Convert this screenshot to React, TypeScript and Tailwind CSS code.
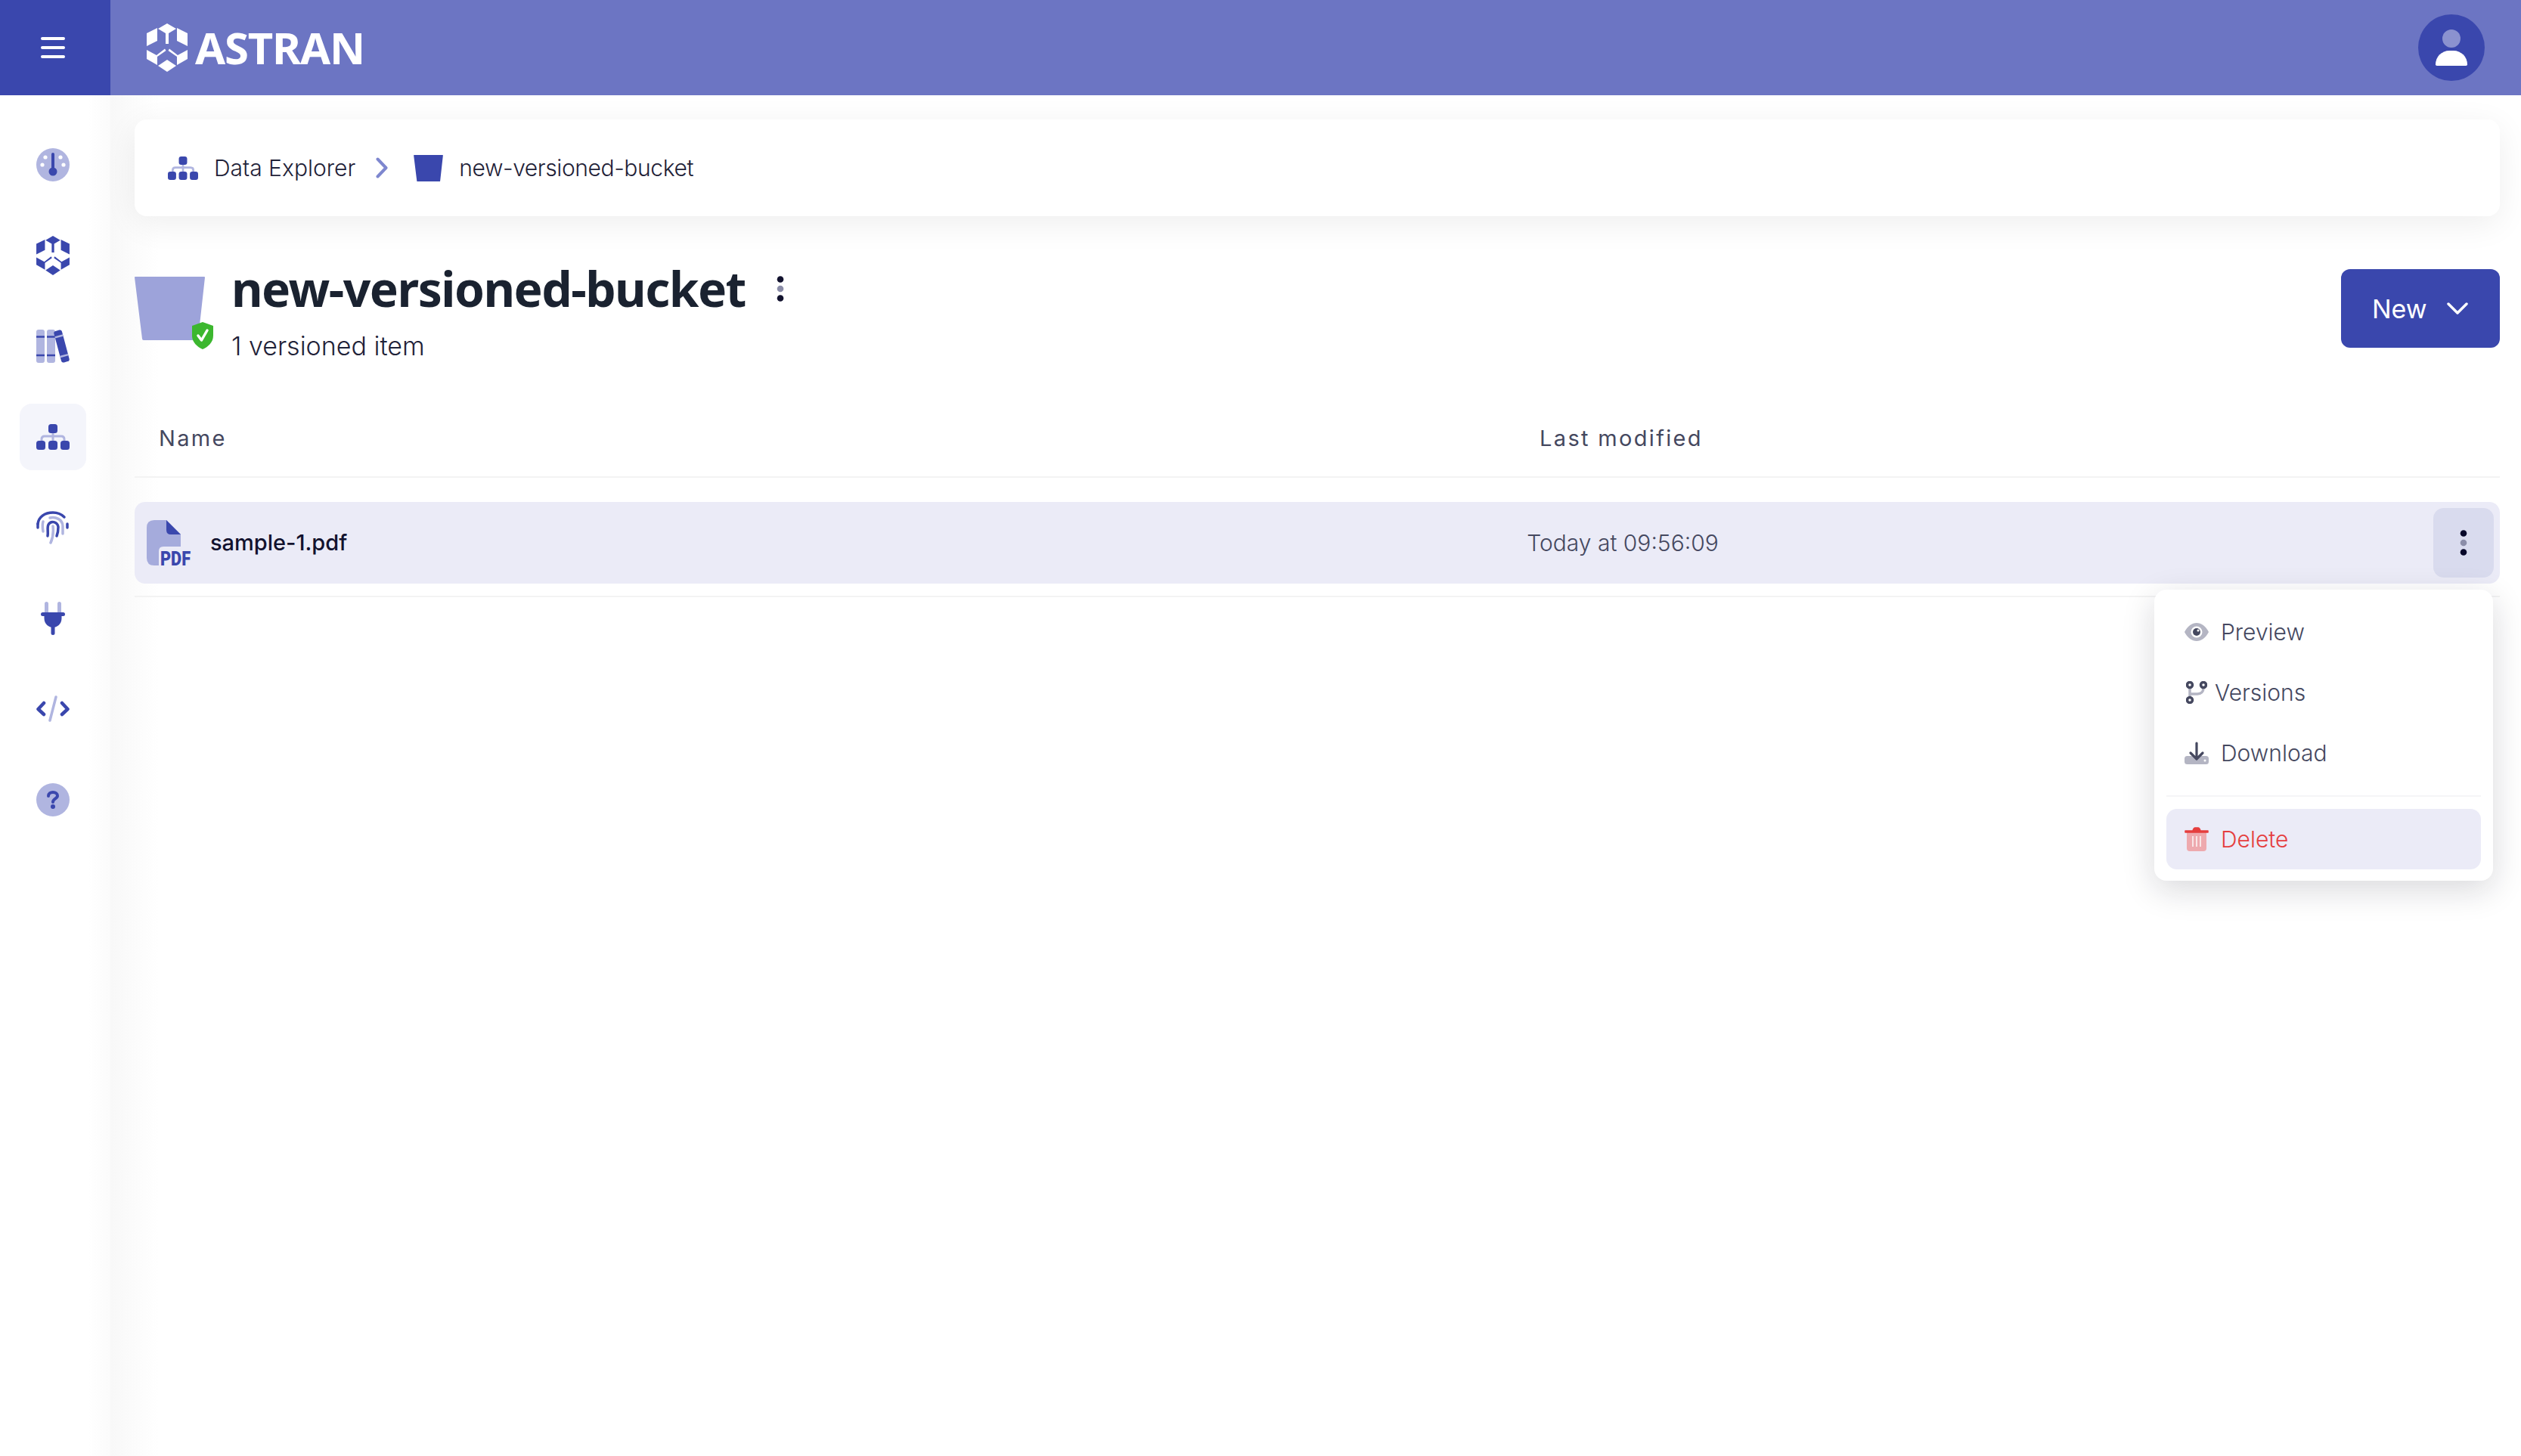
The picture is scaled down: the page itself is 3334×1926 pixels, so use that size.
const DARK = "#3A47AD";
const LIGHT = "#B0B5E0";

function HexLogo({ fill, className }: { fill: string; className?: string }) {
  return (
    <svg viewBox="0 0 54 64" className={className} fill={fill} aria-hidden>
      <path d="M27 0 39 7 29 13V27H25V13L15 7Z" />
      <path d="M0 13 14 6V23L0 30Z" />
      <path d="M54 13 40 6V23L54 30Z" />
      <path d="M0 35 13 42 24 33.5 25.5 36 14 44V55L0 47Z" />
      <path d="M54 35 41 42 30 33.5 28.5 36 40 44V55L54 47Z" />
      <path d="M27 48 39 56 27 64 15 56Z" />
    </svg>
  );
}

function TreeIcon({ className }: { className?: string }) {
  return (
    <svg viewBox="0 0 44 34" className={className} aria-hidden>
      <path d="M7 24V20Q7 16 11 16H33Q37 16 37 20V24M22 8V24" fill="none" stroke={LIGHT} strokeWidth="3" />
      <rect x="16" y="0" width="12" height="12" rx="3.5" fill={DARK} />
      <rect x="0" y="22" width="12" height="12" rx="3.5" fill={DARK} />
      <rect x="16" y="22" width="12" height="12" rx="3.5" fill={DARK} />
      <rect x="32" y="22" width="12" height="12" rx="3.5" fill={DARK} />
    </svg>
  );
}

function GaugeIcon() {
  return (
    <svg viewBox="0 0 44 44" className="h-11 w-11" aria-hidden>
      <circle cx="22" cy="22" r="22" fill={LIGHT} />
      <circle cx="12" cy="12" r="2.6" fill="#fff" />
      <circle cx="32" cy="12" r="2.6" fill="#fff" />
      <circle cx="8" cy="22" r="2.6" fill="#fff" />
      <circle cx="36" cy="22" r="2.6" fill="#fff" />
      <path d="M22 8V28" stroke={DARK} strokeWidth="4" strokeLinecap="round" />
      <circle cx="22" cy="31" r="5.5" fill={DARK} />
    </svg>
  );
}

function BooksIcon() {
  return (
    <svg viewBox="0 0 44 44" className="h-11 w-11 overflow-visible" aria-hidden>
      <rect x="0" y="0" width="11" height="44" rx="3" fill={LIGHT} />
      <rect x="14" y="0" width="11" height="44" rx="3" fill={LIGHT} />
      <path d="M0 9.500H11M14 9.500H25M0 34H11M14 34H25" stroke={DARK} strokeWidth="2.500" />
      <g transform="rotate(-15 33.500 22)">
        <rect x="28" y="0.500" width="11" height="43" rx="3" fill={DARK} />
        <path d="M28 8.500H39M28 35H39" stroke={LIGHT} strokeWidth="2.500" />
      </g>
    </svg>
  );
}

function FingerprintIcon() {
  return (
    <svg viewBox="0 0 44 44" className="h-11 w-11" fill="none" strokeLinecap="round" strokeWidth="3.500" aria-hidden>
      <path d="M2 17C3 8 11 2 22 2C28 2 33 4 37 8" stroke={DARK} />
      <path d="M41 17V22" stroke={DARK} />
      <path d="M2 17V22" stroke={DARK} />
      <path d="M9 14C8 17 8 21 9 27" stroke={LIGHT} />
      <path d="M18 9C25 7 35 11 35 20V30" stroke={LIGHT} />
      <path d="M15 33C16 27 14 22 16 18C19 12 28 14 29 21C29 25 29 28 27 33" stroke={DARK} />
      <path d="M22 20C23 28 22 35 19 42" stroke={LIGHT} />
    </svg>
  );
}

function PlugIcon() {
  return (
    <svg viewBox="0 0 32 44" className="h-11 w-8" aria-hidden>
      <path d="M7.500 2.500V14M24.500 2.500V14" stroke={LIGHT} strokeWidth="5" strokeLinecap="round" />
      <path d="M2.500 16.500H29.500" stroke={DARK} strokeWidth="5" strokeLinecap="round" />
      <path d="M4.500 16H27.500V22C27.500 30 21 34 16 34C11 34 4.500 30 4.500 22Z" fill={DARK} />
      <path d="M16 30V41.500" stroke={DARK} strokeWidth="5" strokeLinecap="round" />
    </svg>
  );
}

function CodeIcon() {
  return (
    <svg viewBox="0 0 44 36" className="h-9 w-11" fill="none" strokeWidth="4.500" strokeLinecap="round" strokeLinejoin="round" aria-hidden>
      <path d="M10 10 2.500 18 10 25" stroke={DARK} />
      <path d="M34 10 41.500 18 34 25" stroke={DARK} />
      <path d="M26 2 18 33" stroke={LIGHT} strokeWidth="3.500" />
    </svg>
  );
}

function HelpIcon() {
  return (
    <svg viewBox="0 0 44 44" className="h-11 w-11" aria-hidden>
      <circle cx="22" cy="22" r="22" fill={LIGHT} />
      <path d="M16 17C16 13.500 19 12 22 12C25.500 12 28 14 28 16.800C28 20.500 22 20.500 22 25" fill="none" stroke={DARK} strokeWidth="4" strokeLinecap="round" />
      <circle cx="22" cy="31" r="3" fill={DARK} />
    </svg>
  );
}

function BucketIcon({ fill, className }: { fill: string; className?: string }) {
  return (
    <svg viewBox="0 0 93 84" className={className} aria-hidden>
      <path d="M1 0H92Q93 0 93 1L84 82Q84 84 82 84H12Q10 84 10 82L0 1Q0 0 1 0Z" fill={fill} />
    </svg>
  );
}

function KebabDots({ dark }: { dark: string }) {
  return (
    <svg viewBox="0 0 10 34" className="h-[34px] w-[10px]" aria-hidden>
      <circle cx="5" cy="4.500" r="4.300" fill={dark} />
      <circle cx="5" cy="17" r="4.300" fill="#8B8DA8" />
      <circle cx="5" cy="29.500" r="4.300" fill={dark} />
    </svg>
  );
}

const Menu = [
  {
    label: "Preview",
    icon: (
      <svg viewBox="0 0 32 24" className="h-6 w-8" aria-hidden>
        <path d="M0 12C4 4 10 0 16 0C22 0 28 4 32 12C28 20 22 24 16 24C10 24 4 20 0 12Z" fill="#B4B5C3" />
        <circle cx="16" cy="12" r="7.500" fill="#fff" />
        <circle cx="16" cy="12" r="5" fill="#45485F" />
        <circle cx="18" cy="10" r="1.500" fill="#fff" />
      </svg>
    ),
    gap: "gap-4",
    iconBox: "w-8",
  },
  {
    label: "Versions",
    icon: (
      <svg viewBox="0 0 28 30" className="h-[30px] w-7" fill="none" aria-hidden>
        <path d="M5 9V21M5 17H15C20 17 23 14 23 9" stroke="#B4B5C3" strokeWidth="3.500" />
        <circle cx="5" cy="5" r="3.500" stroke="#45485F" strokeWidth="3.500" fill="#fff" />
        <circle cx="23" cy="5" r="3.500" stroke="#45485F" strokeWidth="3.500" fill="#fff" />
        <circle cx="5" cy="25" r="3.500" stroke="#45485F" strokeWidth="3.500" fill="#fff" />
      </svg>
    ),
    gap: "gap-[10px]",
    iconBox: "ml-[2px] w-7",
  },
  {
    label: "Download",
    icon: (
      <svg viewBox="0 0 32 30" className="h-[30px] w-8" aria-hidden>
        <rect x="0" y="19" width="32" height="11" rx="3.500" fill="#B4B5C3" />
        <circle cx="27" cy="25" r="1.500" fill="#fff" />
        <path d="M16 2V22M8 15 16 23 24 15" fill="none" stroke="#45485F" strokeWidth="3.200" strokeLinecap="round" strokeLinejoin="round" />
      </svg>
    ),
    gap: "gap-4",
    iconBox: "w-8",
  },
];

function RowMenu() {
  return (
    <div className="absolute right-[9px] top-[116px] z-10 w-[448px] rounded-2xl bg-white px-4 pb-[15px] pt-4 shadow-[0_12px_44px_rgba(20,20,40,0.16)]">
      <ul>
        {Menu.map((item) => (
          <li key={item.label} className={`flex h-20 items-center pl-6 ${item.gap} text-[#45485F]`}>
            <span className={`flex shrink-0 justify-center ${item.iconBox}`}>{item.icon}</span>
            <span className="text-[30px] font-light">{item.label}</span>
          </li>
        ))}
      </ul>
      <div className="mb-4 mt-4 h-[2px] bg-[#F5F5F7]" />
      <div className="flex h-20 items-center gap-4 rounded-[14px] bg-[#EBEBF7] pl-6 text-[#E53E3E]">
        <svg viewBox="0 0 32 32" className="h-8 w-8 shrink-0" aria-hidden>
          <path d="M3 7H29V28Q29 32 25 32H7Q3 32 3 28Z" fill="#EEA9AE" />
          <path d="M11 12V26M16 12V26M21 12V26" stroke="#fff" strokeWidth="2" opacity="0.7" />
          <path d="M1 5H11Q12 1 14 1H18Q20 1 21 5H31V7H1Z" fill="#E53E3E" stroke="#E53E3E" strokeWidth="1.500" strokeLinejoin="round" />
        </svg>
        <span className="text-[30px] font-light">Delete</span>
      </div>
    </div>
  );
}

export default function App() {
  return (
    <div className="flex h-[1926px] w-[3334px] flex-col overflow-hidden bg-white font-[Inter,sans-serif] text-[#1F2238]">
      <header className="flex h-[126px] shrink-0 items-center bg-[#6C75C3]">
        <div className="flex h-full w-[146px] items-center bg-[#3A47AD] pl-[54px]">
          <div className="flex w-8 flex-col gap-[8px]">
            <span className="h-1 rounded-full bg-white" />
            <span className="h-1 rounded-full bg-white" />
            <span className="h-1 rounded-full bg-white" />
          </div>
        </div>
        <div className="ml-12 flex items-center gap-[10px]">
          <HexLogo fill="#fff" className="h-16 w-[54px]" />
          <span className="font-['Noto_Sans'] text-[58px] font-bold leading-none tracking-[-0.02em] text-white">ASTRAN</span>
        </div>
        <div className="ml-auto mr-[48px] flex h-[88px] w-[88px] flex-col items-center justify-center gap-[4px] rounded-full bg-[#3A47AD]">
          <span className="h-6 w-6 rounded-full bg-[#8B92CF]" />
          <span className="h-5 w-[42px] rounded-t-[20px] rounded-b-[2px] bg-white" />
        </div>
      </header>

      <div className="flex min-h-0 flex-1">
        <aside className="flex w-[146px] shrink-0 flex-col items-start gap-8 bg-gradient-to-r from-white from-80% to-[#FBFBFB] pl-[26px] pt-12">
          <div className="flex h-[88px] w-[88px] items-center justify-center"><GaugeIcon /></div>
          <div className="flex h-[88px] w-[88px] items-center justify-center"><HexLogo fill={DARK} className="h-[52px] w-11" /></div>
          <div className="flex h-[88px] w-[88px] items-center justify-center"><BooksIcon /></div>
          <div className="flex h-[88px] w-[88px] items-center justify-center rounded-2xl bg-[#F4F5FB]"><TreeIcon className="h-[34px] w-11" /></div>
          <div className="flex h-[88px] w-[88px] items-center justify-center"><FingerprintIcon /></div>
          <div className="flex h-[88px] w-[88px] items-center justify-center"><PlugIcon /></div>
          <div className="flex h-[88px] w-[88px] items-center justify-center"><CodeIcon /></div>
          <div className="flex h-[88px] w-[88px] items-center justify-center"><HelpIcon /></div>
        </aside>

        <main className="min-w-0 flex-1 bg-gradient-to-r from-[#F8F8F8] to-white to-[2%] pl-8 pr-7 pt-8">
          <nav className="flex h-32 items-center rounded-2xl bg-white pl-11 shadow-[0_10px_44px_rgba(0,0,0,0.07)]">
            <TreeIcon className="h-[31px] w-10" />
            <span className="ml-[21px] text-[30px] font-light">Data Explorer</span>
            <svg viewBox="0 0 16 28" className="ml-[27px] h-7 w-4" fill="none" aria-hidden>
              <path d="M2.500 2.500 13.500 14 2.500 25.500" stroke="#7E87CF" strokeWidth="4" strokeLinecap="round" strokeLinejoin="round" />
            </svg>
            <BucketIcon fill={DARK} className="ml-[34px] h-[35px] w-[39px]" />
            <span className="ml-[21px] text-[30px] font-light tracking-[-0.4px]">new-versioned-bucket</span>
          </nav>

          <section className="mt-[70px] flex h-[104px] items-start justify-between">
            <div className="flex items-start">
              <div className="relative mt-[10px] h-[84px] w-[93px]">
                <BucketIcon fill="#9DA3DA" className="h-[84px] w-[93px]" />
                <svg viewBox="0 0 28 36" className="absolute left-[76px] top-[60px] h-9 w-7" aria-hidden>
                  <path d="M14 0 28 5V18C28 27 21 33 14 36C7 33 0 27 0 18V5Z" fill="#3CB72F" />
                  <path d="M8 18 12.500 24 20 11" fill="none" stroke="#fff" strokeWidth="3.500" strokeLinecap="round" strokeLinejoin="round" />
                </svg>
              </div>
              <div className="ml-[35px]">
                <div className="flex items-center">
                  <h1 className="font-['Noto_Sans'] text-[64px] font-bold leading-[52px] tracking-[-1.5px] text-[#1A2230]">new-versioned-bucket</h1>
                  <span className="ml-[41px] flex"><KebabDots dark="#12122E" /></span>
                </div>
                <p className="mt-[30px] whitespace-nowrap text-[34px] font-light leading-10">1 versioned item</p>
              </div>
            </div>
            <button className="flex h-[104px] w-[210px] items-center rounded-xl bg-[#3A47AD] pl-[41px] text-[34px] font-normal text-white">
              New
              <svg viewBox="0 0 28 16" className="ml-[26px] h-4 w-7" fill="none" aria-hidden>
                <path d="M2 2 14 14 26 2" stroke="#fff" strokeWidth="3.500" strokeLinecap="round" strokeLinejoin="round" />
              </svg>
            </button>
          </section>

          <div className="mt-[70px] flex h-[102px] items-center border-b-2 border-[#F3F3F3] text-[29px] font-normal tracking-[0.08em] text-[#45485F]">
            <span className="w-[1760px] pl-8">Name</span>
            <span className="w-[412px] text-center">Last modified</span>
          </div>

          <div className="border-b-2 border-[#F3F3F3] pb-4 pt-8">
            <div className="relative flex h-[108px] items-center rounded-[14px] bg-[#EBEBF7]">
              <div className="flex w-[1760px] items-center pl-4">
                <svg viewBox="0 -8 70 76" className="h-[76px] w-[70px] shrink-0" aria-hidden>
                  <path d="M10 0H26L45 19V35H22Q16 35 16 41V60H10Q0 60 0 50V10Q0 0 10 0Z" fill="#A5ABDC" />
                  <path d="M26 0 45 19H32Q26 19 26 13Z" fill={DARK} />
                  <text x="18" y="60" fill={DARK} fontFamily="Roboto, sans-serif" fontSize="25" fontWeight="900" textLength="40" lengthAdjust="spacingAndGlyphs">PDF</text>
                </svg>
                <span className="ml-[14px] text-[29px] font-medium text-[#12122E]">sample-1.pdf</span>
              </div>
              <span className="ml-[2px] w-[412px] text-center text-[30px] font-light text-[#45485F]">Today at 09:56:09</span>
              <button className="absolute right-2 top-2 flex h-[92px] w-20 items-center justify-center rounded-[14px] bg-[#D9DBEE]">
                <KebabDots dark="#08082A" />
              </button>
              <RowMenu />
            </div>
          </div>
        </main>
      </div>
    </div>
  );
}
